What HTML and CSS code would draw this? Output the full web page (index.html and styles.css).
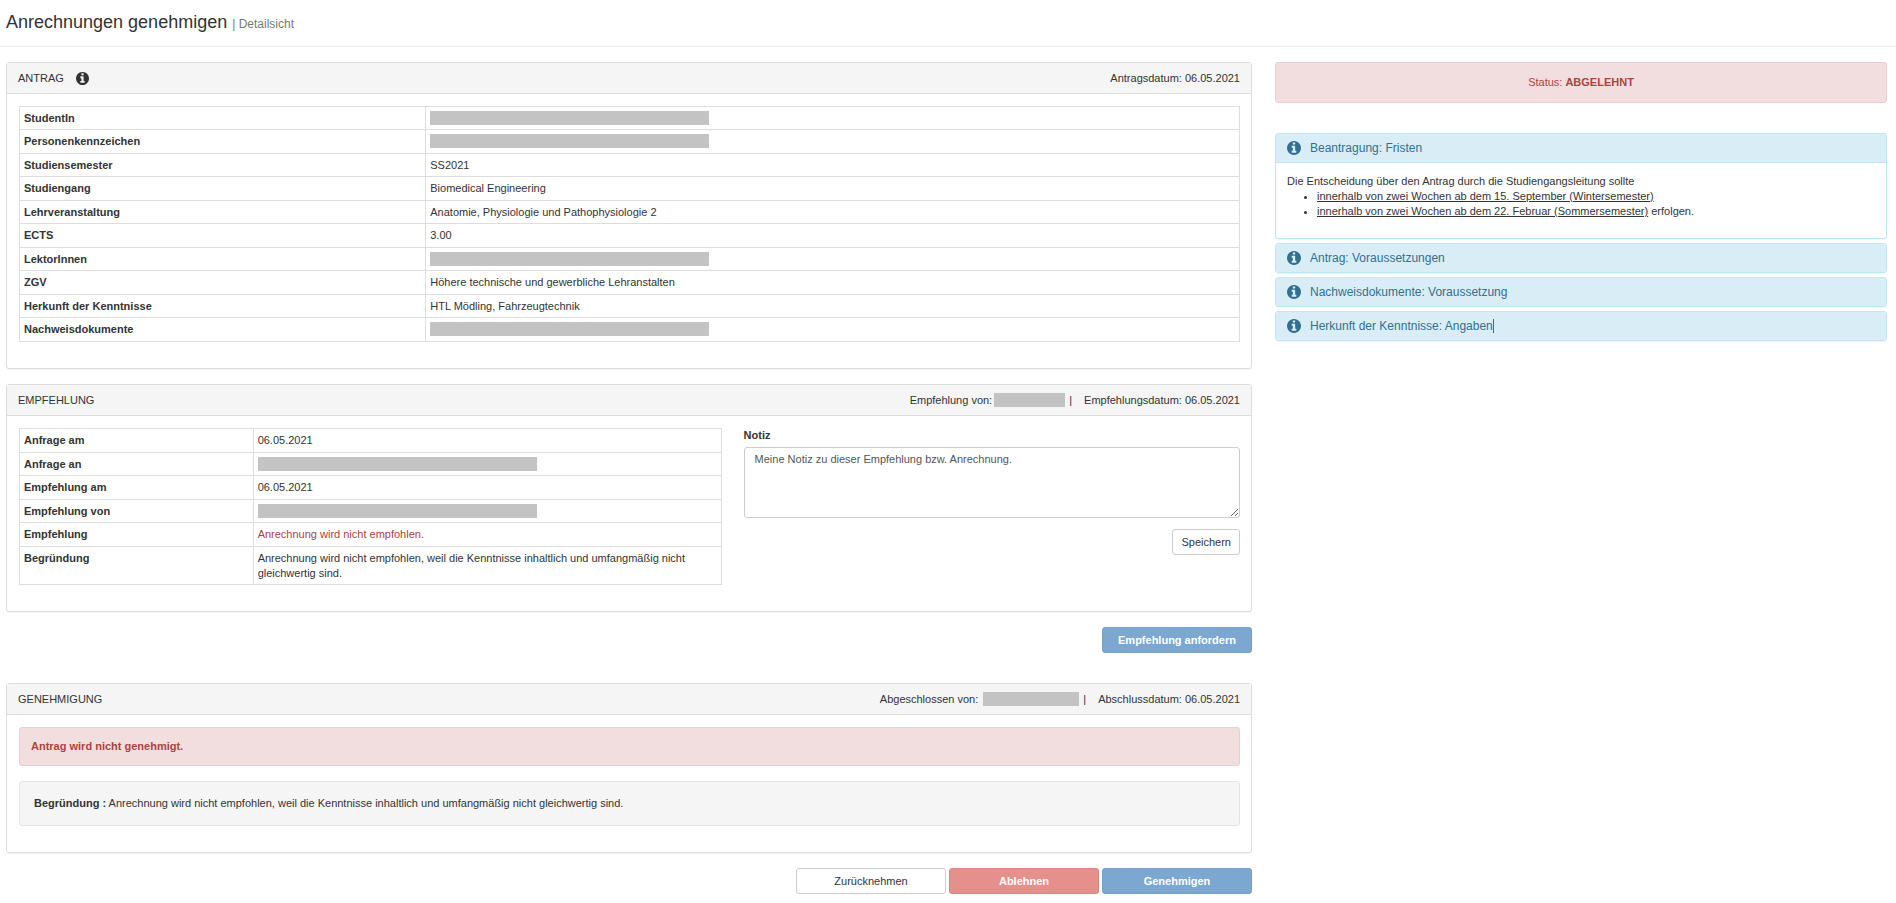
FILE: index.html
```html
<!DOCTYPE html>
<html lang="de">
<head>
    <meta charset="UTF-8">
    <meta name="viewport" content="width=device-width, initial-scale=1.0">
    <title>Anrechnungen genehmigen</title>
    <link rel="stylesheet" href="styles.css">
</head>
<body>
    <!-- info icon, reused in the headings -->
    <svg class="sprite" width="0" height="0" aria-hidden="true">
        <symbol id="info-circle" viewBox="0 0 1536 1536">
            <path d="M1024 1248v-160q0-14-9-23t-23-9h-96V544q0-14-9-23t-23-9H544q-14 0-23 9t-9 23v160q0 14 9 23t23 9h96v320h-96q-14 0-23 9t-9 23v160q0 14 9 23t23 9h448q14 0 23-9t9-23zM896 352V192q0-14-9-23t-23-9H672q-14 0-23 9t-9 23v160q0 14 9 23t23 9h192q14 0 23-9t9-23zM1536 768q0 209-103 385.500T1153.500 1433 768 1536t-385.500-103T103 1153.500 0 768t103-385.500T382.500 103 768 0t385.500 103T1433 382.500 1536 768z"/>
        </symbol>
    </svg>

    <header class="page-header">
        <h1>Anrechnungen genehmigen <small>| Detailsicht</small></h1>
    </header>

    <div class="row">
        <main class="col-main">
            <section class="panel">
                <div class="panel-heading">
                    <h2>ANTRAG</h2>
                    <svg class="icon"><use href="#info-circle"/></svg>
                    <div class="panel-info">Antragsdatum: 06.05.2021</div>
                </div>
                <div class="panel-body">
                    <table class="table table-antrag">
                        <tr><th>StudentIn</th><td><span class="redacted"></span></td></tr>
                        <tr><th>Personenkennzeichen</th><td><span class="redacted"></span></td></tr>
                        <tr><th>Studiensemester</th><td>SS2021</td></tr>
                        <tr><th>Studiengang</th><td>Biomedical Engineering</td></tr>
                        <tr><th>Lehrveranstaltung</th><td>Anatomie, Physiologie und Pathophysiologie 2</td></tr>
                        <tr><th>ECTS</th><td>3.00</td></tr>
                        <tr><th>LektorInnen</th><td><span class="redacted"></span></td></tr>
                        <tr><th>ZGV</th><td>Höhere technische und gewerbliche Lehranstalten</td></tr>
                        <tr><th>Herkunft der Kenntnisse</th><td>HTL Mödling, Fahrzeugtechnik</td></tr>
                        <tr><th>Nachweisdokumente</th><td><span class="redacted"></span></td></tr>
                    </table>
                </div>
            </section>

            <section class="panel">
                <div class="panel-heading">
                    <h2>EMPFEHLUNG</h2>
                    <div class="panel-info">
                        <span>Empfehlung von:</span>
                        <span class="redacted redacted-name"></span>
                        <span class="divider">|</span>
                        <span>Empfehlungsdatum: 06.05.2021</span>
                    </div>
                </div>
                <div class="panel-body empfehlung">
                    <table class="table table-empfehlung">
                        <tr><th>Anfrage am</th><td>06.05.2021</td></tr>
                        <tr><th>Anfrage an</th><td><span class="redacted"></span></td></tr>
                        <tr><th>Empfehlung am</th><td>06.05.2021</td></tr>
                        <tr><th>Empfehlung von</th><td><span class="redacted"></span></td></tr>
                        <tr><th>Empfehlung</th><td class="text-danger">Anrechnung wird nicht empfohlen.</td></tr>
                        <tr><th>Begründung</th><td>Anrechnung wird nicht empfohlen, weil die Kenntnisse inhaltlich und umfangmäßig nicht gleichwertig sind.</td></tr>
                    </table>
                    <form class="notiz">
                        <label for="notiz">Notiz</label>
                        <textarea id="notiz" name="notiz">Meine Notiz zu dieser Empfehlung bzw. Anrechnung.</textarea>
                        <button type="button" class="btn btn-default">Speichern</button>
                    </form>
                </div>
            </section>

            <div class="actions actions-empfehlung">
                <button type="button" class="btn btn-wide btn-primary">Empfehlung anfordern</button>
            </div>

            <section class="panel">
                <div class="panel-heading">
                    <h2>GENEHMIGUNG</h2>
                    <div class="panel-info">
                        <span>Abgeschlossen von:</span>
                        <span class="redacted redacted-fullname"></span>
                        <span class="divider">|</span>
                        <span>Abschlussdatum: 06.05.2021</span>
                    </div>
                </div>
                <div class="panel-body">
                    <div class="alert"><b>Antrag wird nicht genehmigt.</b></div>
                    <div class="well"><b>Begründung :</b> Anrechnung wird nicht empfohlen, weil die Kenntnisse inhaltlich und umfangmäßig nicht gleichwertig sind.</div>
                </div>
            </section>

            <div class="actions">
                <button type="button" class="btn btn-wide btn-default">Zurücknehmen</button>
                <button type="button" class="btn btn-wide btn-danger">Ablehnen</button>
                <button type="button" class="btn btn-wide btn-primary">Genehmigen</button>
            </div>
        </main>

        <aside class="col-side">
            <div class="alert alert-status">Status: <b>ABGELEHNT</b></div>

            <div class="accordion">
                <div class="info-panel">
                    <a class="info-heading" href="#fristen"><svg class="icon icon-lg"><use href="#info-circle"/></svg>Beantragung: Fristen</a>
                    <div class="info-body" id="fristen">
                        Die Entscheidung über den Antrag durch die Studiengangsleitung sollte
                        <ul>
                            <li><u>innerhalb von zwei Wochen ab dem 15. September (Wintersemester)</u></li>
                            <li><u>innerhalb von zwei Wochen ab dem 22. Februar (Sommersemester)</u> erfolgen.</li>
                        </ul>
                    </div>
                </div>
                <div class="info-panel">
                    <a class="info-heading" href="#antrag"><svg class="icon icon-lg"><use href="#info-circle"/></svg>Antrag: Voraussetzungen</a>
                </div>
                <div class="info-panel">
                    <a class="info-heading" href="#nachweis"><svg class="icon icon-lg"><use href="#info-circle"/></svg>Nachweisdokumente: Voraussetzung</a>
                </div>
                <div class="info-panel">
                    <a class="info-heading" href="#herkunft"><svg class="icon icon-lg"><use href="#info-circle"/></svg>Herkunft der Kenntnisse: Angaben<span class="caret"></span></a>
                </div>
            </div>
        </aside>
    </div>
</body>
</html>
```
FILE: styles.css
```css
* {
    box-sizing: border-box;
}
body {
    margin: 0;
    font-family: Arial, "Liberation Sans", sans-serif;
    font-size: 11px;
    line-height: 15px;
    color: #333;
    background: #fff;
}
.sprite {
    position: absolute;
}
.page-header {
    padding: 10px 6px;
    border-bottom: 1px solid #eee;
}
.page-header h1 {
    margin: 0;
    font-size: 18px;
    line-height: 24px;
    font-weight: normal;
}
.page-header small {
    font-size: 12px;
    color: #777;
}
.row {
    display: grid;
    grid-template-columns: minmax(0, 1246fr) minmax(0, 612fr);
    gap: 23px;
    padding: 15px 9px 10px 6px;
}

/* panels */
.panel {
    margin-bottom: 15px;
    border: 1px solid #ddd;
    border-radius: 3px;
    box-shadow: 0 1px 1px rgba(0, 0, 0, 0.05);
}
.panel-heading {
    display: flex;
    align-items: center;
    gap: 12px;
    height: 31px;
    padding: 0 11px;
    background: #f5f5f5;
    border-bottom: 1px solid #ddd;
}
.panel-heading h2 {
    margin: 0;
    font-size: 11px;
    line-height: 15px;
    font-weight: normal;
}
.panel-info {
    display: flex;
    align-items: center;
    margin-left: auto;
}
.panel-body {
    padding: 12px 11px 26px 12px;
}
.icon {
    width: 13px;
    height: 13px;
    fill: currentColor;
}
.icon-lg {
    width: 14px;
    height: 14px;
    margin-right: 9px;
}

/* tables */
.table {
    width: 100%;
    border-collapse: collapse;
    table-layout: fixed;
}
.table th,
.table td {
    padding: 4px;
    border: 1px solid #ddd;
    line-height: 15px;
    text-align: left;
    vertical-align: top;
}
.table-antrag tr:nth-child(odd) > *,
.table-empfehlung tr:nth-child(even) > * {
    padding-bottom: 3px;
}
.table th {
    width: 33.3%;
}
.redacted {
    display: block;
    width: 279px;
    max-width: 100%;
    height: 14px;
    background: #c3c3c3;
}
.redacted-name {
    width: 71px;
    margin-left: 2px;
}
.redacted-fullname {
    width: 96px;
    margin-left: 5px;
}
.divider {
    margin: 0 12px 0 4px;
}
.text-danger {
    color: #a94442;
}

/* note */
.empfehlung {
    display: grid;
    grid-template-columns: minmax(0, 702fr) minmax(0, 496fr);
    align-items: start;
    gap: 22px;
}
.notiz {
    display: flex;
    flex-direction: column;
}
.notiz label {
    margin-bottom: 4px;
    font-weight: bold;
}
.notiz textarea {
    height: 71px;
    padding: 4px 10px;
    border: 1px solid #ccc;
    border-radius: 3px;
    font: inherit;
    color: #555;
    resize: vertical;
}
.notiz .btn {
    align-self: flex-end;
    margin-top: 11px;
}

/* buttons */
.btn {
    height: 26px;
    padding: 0 8px;
    border: 1px solid #ccc;
    border-radius: 3px;
    font-family: inherit;
    font-size: 11px;
    line-height: 15px;
    color: #333;
    background: #fff;
    cursor: pointer;
}
.btn-wide {
    width: 150px;
}
.btn-primary {
    border-color: #76a0c7;
    background: #7ba7d0;
    color: #fff;
    font-weight: bold;
}
.btn-danger {
    border-color: #df8683;
    background: #e6908d;
    color: #fff;
    font-weight: bold;
}
.actions {
    display: flex;
    justify-content: flex-end;
    gap: 3px;
}
.actions-empfehlung {
    margin-bottom: 30px;
}

/* alerts */
.alert {
    padding: 11px;
    border: 1px solid #ebccd1;
    border-radius: 3px;
    color: #a94442;
    background: #f2dede;
}
.alert-status {
    padding: 12px;
    margin-bottom: 30px;
    text-align: center;
}
.well {
    margin-top: 15px;
    padding: 14px;
    border: 1px solid #e3e3e3;
    border-radius: 3px;
    background: #f5f5f5;
}

/* info accordion */
.accordion {
    display: flex;
    flex-direction: column;
    gap: 4px;
}
.info-panel {
    border: 1px solid #bce8f1;
    border-radius: 3px;
    box-shadow: 0 1px 1px rgba(0, 0, 0, 0.05);
}
.info-heading {
    display: flex;
    align-items: center;
    height: 28px;
    padding: 0 11px;
    font-size: 12px;
    color: #31708f;
    background: #d9edf7;
    text-decoration: none;
}
.info-body {
    padding: 11px 11px 19px;
    border-top: 1px solid #bce8f1;
}
.info-body ul {
    margin: 0;
    padding-left: 30px;
}
.caret {
    width: 1px;
    height: 14px;
    background: #31708f;
}
```
